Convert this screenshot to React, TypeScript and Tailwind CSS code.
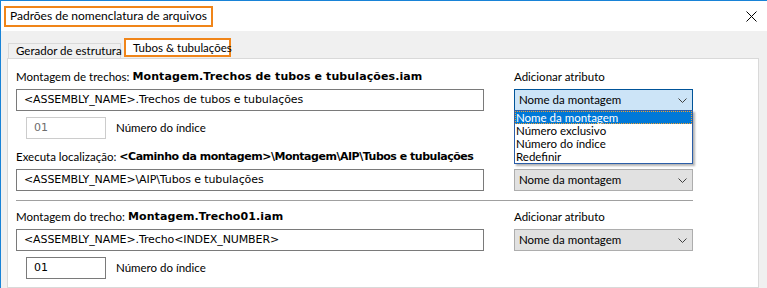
import { useState } from "react"

const ui = "font-['Lato',sans-serif]"
const tah = "font-['DejaVu_Sans',sans-serif]"

function Chevron() {
  return (
    <svg width="9" height="5" viewBox="0 0 9 5" className="shrink-0">
      <polyline points="0.5,0.5 4.5,4.5 8.5,0.5" fill="none" stroke="#404040" strokeWidth="1" />
    </svg>
  )
}

function Combo({ focused = false }: { focused?: boolean }) {
  return (
    <div
      className={`w-[179px] h-[22px] flex items-center justify-between pl-[4px] pr-[5px] border ${
        focused ? "bg-[#cce4f7] border-[#005499]" : "bg-[#e1e1e1] border-[#adadad]"
      }`}
    >
      <span className="text-[11.5px] text-black">Nome da montagem</span>
      <Chevron />
    </div>
  )
}

function TextBox({ value }: { value: string }) {
  return (
    <div className={`w-[468px] h-[22px] border border-[#7a7a7a] bg-white flex items-center pl-[7px] ${tah} text-[11px] tracking-[-0.1px] text-black`}>
      {value}
    </div>
  )
}

function IndexRow({ disabled = false }: { disabled?: boolean }) {
  return (
    <div className="flex items-center h-[22px] ml-[10px]">
      <div
        className={`w-[80px] h-[22px] border bg-white flex items-center pl-[7px] ${tah} text-[11px] ${
          disabled ? "border-[#cccccc] text-[#6d6d6d]" : "border-[#7a7a7a] text-black"
        }`}
      >
        01
      </div>
      <span className="ml-[10px] text-[11.5px] text-black">Número do índice</span>
    </div>
  )
}

function Label({ name, value, track }: { name: string; value: string; track: string }) {
  return (
    <div className="h-[16px] flex items-center text-[11.5px] text-black whitespace-nowrap">
      <span>{name}</span>
      <span className={`ml-[3px] font-bold ${tah} text-[11px] ${track}`}>{value}</span>
    </div>
  )
}

export default function App() {
  const [tab, setTab] = useState(1)
  const options = ["Nome da montagem", "Número exclusivo", "Número do índice", "Redefinir"]

  return (
    <div className={`w-[767px] h-[288px] overflow-hidden bg-[#f0f0f0] border-t border-l border-[#1883d7] flex flex-col ${ui}`}>
      {/* title bar */}
      <div className="h-[30px] bg-white flex items-center justify-between shrink-0">
        <div className="ml-[3px] w-[209px] h-[21px] pl-[4px] border-2 border-[#f08519] flex items-center text-[12px] text-black whitespace-nowrap">
          Padrões de nomenclatura de arquivos
        </div>
        <svg width="11" height="11" viewBox="0 0 11 11" className="mr-[10px]">
          <path d="M0.5 0.5 L10.5 10.5 M10.5 0.5 L0.5 10.5" stroke="#000" strokeWidth="1" />
        </svg>
      </div>

      {/* tabs */}
      <div className="flex items-end pl-[7px] h-[27px] shrink-0">
        <button
          onClick={() => setTab(0)}
          className={`w-[113px] h-[15px] pl-[7px] border border-b-0 border-[#d9d9d9] text-[11.5px] text-black flex items-center whitespace-nowrap ${
            tab === 0 ? "bg-white" : "bg-[#f0f0f0]"
          }`}
        >
          Gerador de estrutura
        </button>
        <button
          onClick={() => setTab(1)}
          className="ml-[3px] w-[107px] h-[19px] pl-[7px] mb-[1px] border-2 border-[#f08519] bg-white text-[11.5px] text-black flex items-center whitespace-nowrap"
        >
          Tubos &amp; tubulações
        </button>
      </div>

      {/* panel */}
      <div className="flex-1 ml-[6px] w-[752px] bg-white border border-[#d9d9d9] pl-[8px] pt-[10px]">
        <div className="flex">
          <div className="w-[468px] flex flex-col">
            <Label name="Montagem de trechos:" value="Montagem.Trechos de tubos e tubulações.iam" track="tracking-[0.1px]" />
            <div className="mt-[4px]">
              <TextBox value="<ASSEMBLY_NAME>.Trechos de tubos e tubulações" />
            </div>
            <div className="mt-[6px]">
              <IndexRow disabled />
            </div>
            <div className="mt-[10px]">
              <Label
                name="Executa localização:"
                value="<Caminho da montagem>\Montagem\AIP\Tubos e tubulações"
                track="tracking-[-0.48px]"
              />
            </div>
            <div className="mt-[4px]">
              <TextBox value="<ASSEMBLY_NAME>\AIP\Tubos e tubulações" />
            </div>
          </div>
          <div className="ml-[30px] w-[179px] flex flex-col">
            <div className="h-[16px] flex items-center text-[11.5px] text-black">Adicionar atributo</div>
            <div className="mt-[4px] relative">
              <Combo focused />
              <div className="absolute left-0 top-[21px] w-[179px] bg-white border border-[#2b5ea8] shadow-[2px_2px_2px_rgba(0,0,0,0.3)] z-10">
                {options.map((o, i) => (
                  <div
                    key={o}
                    className={`h-[13px] flex items-center pl-[1px] text-[11.5px] leading-[13px] ${
                      i === 0 ? "bg-[#0078d7] text-white outline-1 outline-dotted outline-[#f0a030] -outline-offset-1" : "text-black"
                    }`}
                  >
                    {o}
                  </div>
                ))}
              </div>
            </div>
            <div className="mt-[58px]">
              <Combo />
            </div>
          </div>
        </div>

        <div className="mt-[9px] w-[677px] h-px bg-[#a0a0a0]" />

        <div className="flex mt-[8px]">
          <div className="w-[468px] flex flex-col">
            <Label name="Montagem do trecho:" value="Montagem.Trecho01.iam" track="tracking-[0.1px]" />
            <div className="mt-[4px]">
              <TextBox value="<ASSEMBLY_NAME>.Trecho<INDEX_NUMBER>" />
            </div>
            <div className="mt-[6px]">
              <IndexRow />
            </div>
          </div>
          <div className="ml-[30px] w-[179px] flex flex-col">
            <div className="h-[16px] flex items-center text-[11.5px] text-black">Adicionar atributo</div>
            <div className="mt-[4px]">
              <Combo />
            </div>
          </div>
        </div>
      </div>
    </div>
  )
}
